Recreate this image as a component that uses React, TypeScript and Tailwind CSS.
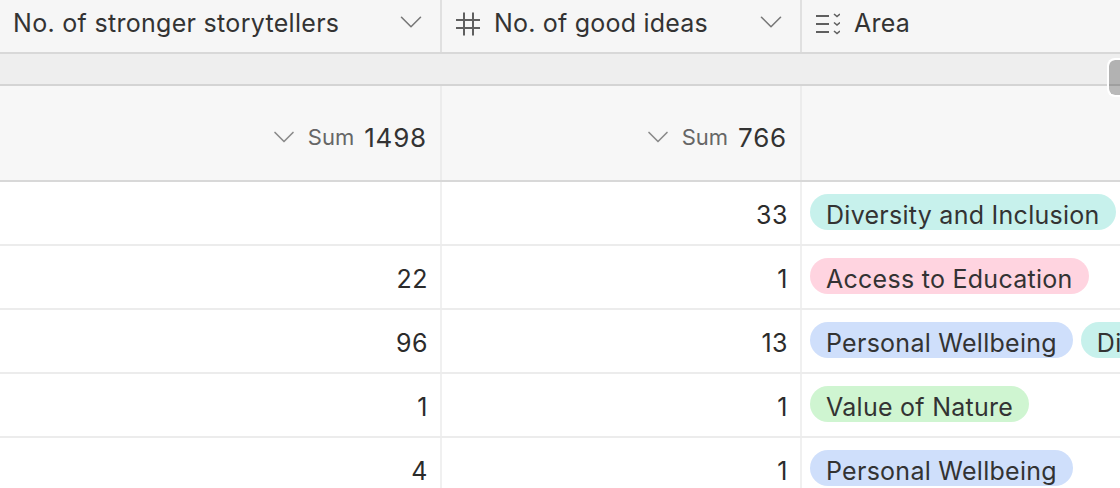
import { ChevronDown } from "lucide-react";

const font = { fontFamily: "Inter, sans-serif" };

type Tag = { label: string; color: string };

const rows: { stronger: string; good: string; tags: Tag[] }[] = [
  { stronger: "", good: "33", tags: [{ label: "Diversity and Inclusion", color: "bg-[#c7f1ec]" }] },
  { stronger: "22", good: "1", tags: [{ label: "Access to Education", color: "bg-[#ffd4e0]" }] },
  {
    stronger: "96",
    good: "13",
    tags: [
      { label: "Personal Wellbeing", color: "bg-[#cfdffb]" },
      { label: "Diversity and Inclusion", color: "bg-[#c7f1ec]" },
    ],
  },
  { stronger: "1", good: "1", tags: [{ label: "Value of Nature", color: "bg-[#cff5d1]" }] },
  { stronger: "4", good: "1", tags: [{ label: "Personal Wellbeing", color: "bg-[#cfdffb]" }] },
];

function NumberIcon() {
  return (
    <svg width="24" height="26" viewBox="0 0 24 26" fill="none" stroke="#5f5f5f" strokeWidth="2" className="shrink-0">
      <path d="M8 1.5v23M17 1.5v23M0 9h24M0 17h24" />
    </svg>
  );
}

function MultiSelectIcon() {
  return (
    <svg width="24" height="24" viewBox="0 0 24 24" fill="none" stroke="#5f5f5f" className="shrink-0">
      <path strokeWidth="2" d="M0 4h13M0 12h13M0 20h13" />
      <path strokeWidth="1.6" d="M18 2l3 2.5 3-2.5M18 10.5l3 2.5 3-2.5M18 19l3 2.5 3-2.5" />
    </svg>
  );
}

function SumCell({ value }: { value: string }) {
  return (
    <div className="h-full flex items-center justify-end pt-[8px] pr-[13px] border-r-2 border-[#ececec]">
      <ChevronDown size={36} strokeWidth={1.1} className="text-[#8a8a8a] mr-[6px]" />
      <span className="text-[22px] text-[#666] mr-[10px]">Sum</span>
      <span className="text-[26px] text-[#333] tracking-[0.8px]">{value}</span>
    </div>
  );
}

export default function App() {
  return (
    <div style={font} className="relative w-[1120px] h-[488px] overflow-hidden bg-white text-[#2b2b2b]">
      {/* Column headers */}
      <div className="grid grid-cols-[442px_360px_1fr] h-[54px] bg-[#f6f6f6] border-b-2 border-[#d8d8d8]">
        <div className="flex items-center justify-between pb-[4px] pl-[13px] pr-[10px] border-r-2 border-[#e0e0e0]">
          <span className="text-[25px] tracking-[0.3px] text-[#333]">No. of stronger storytellers</span>
          <ChevronDown size={38} strokeWidth={1} className="text-[#777] mb-[4px]" />
        </div>
        <div className="flex items-center pb-[4px] pl-[14px] pr-[10px] border-r-2 border-[#e0e0e0]">
          <NumberIcon />
          <span className="ml-[14px] text-[25px] tracking-[0.2px] text-[#333]">No. of good ideas</span>
          <ChevronDown size={38} strokeWidth={1} className="ml-auto text-[#777] mb-[4px]" />
        </div>
        <div className="flex items-center pb-[4px] pl-[14px]">
          <MultiSelectIcon />
          <span className="ml-[14px] text-[25px] tracking-[0.2px] text-[#333]">Area</span>
        </div>
      </div>

      {/* Group spacer */}
      <div className="h-[32px] bg-[#eeeeee] border-b-2 border-[#d4d4d4]" />

      {/* Summary row */}
      <div className="grid grid-cols-[442px_360px_1fr] h-[96px] bg-[#f7f7f7] border-b-2 border-[#d8d8d8]">
        <SumCell value="1498" />
        <SumCell value="766" />
        <div />
      </div>

      {/* Data rows */}
      {rows.map((row, i) => (
        <div key={i} className="grid grid-cols-[442px_360px_1fr] h-[64px] border-b-2 border-[#ececec]">
          <div className="flex items-center justify-end pt-[6px] pr-[12px] border-r-2 border-[#f0f0f0] text-[25px] tracking-[0.5px]">
            {row.stronger}
          </div>
          <div className="flex items-center justify-end pt-[6px] pr-[12px] border-r-2 border-[#f0f0f0] text-[25px] tracking-[0.5px]">
            {row.good}
          </div>
          <div className="flex items-center gap-[8px] pb-[2px] pl-[8px] overflow-hidden">
            {row.tags.map((tag) => (
              <span
                key={tag.label}
                className={`shrink-0 h-[36px] pt-[8px] pl-[16px] pr-[16px] rounded-full flex items-center text-[25px] tracking-[0.27px] text-[#333] ${tag.color}`}
              >
                {tag.label}
              </span>
            ))}
          </div>
        </div>
      ))}

      {/* Scrollbar thumb */}
      <div className="absolute right-0 top-[58px] w-[13px] h-[39px] rounded-l-[8px] bg-black/25 bg-clip-padding border-2 border-r-0 border-white" />
    </div>
  );
}
